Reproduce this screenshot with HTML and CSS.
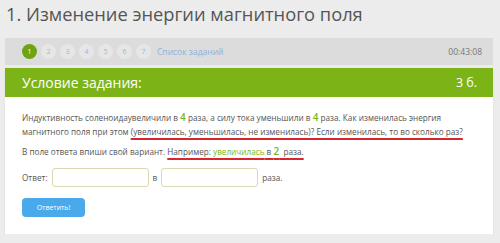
FILE: index.html
```html
<!doctype html>
<html>
  <head>
    <meta charset="utf-8">
    <title>Изменение энергии магнитного поля</title>
    <link rel="stylesheet" href="styles.css">
  </head>
  <body>
    <h1 class="title">1. Изменение энергии магнитного поля</h1>

    <div class="nav">
      <div class="steps">
        <span class="step active">1</span>
        <span class="step">2</span>
        <span class="step">3</span>
        <span class="step">4</span>
        <span class="step">5</span>
        <span class="step">6</span>
        <span class="step">7</span>
        <a class="task-list">Список заданий</a>
      </div>
      <span class="timer">00:43:08</span>
    </div>

    <div class="card">
      <div class="card-header">
        <span>Условие задания:</span>
        <span class="points">3 б.</span>
      </div>
      <div class="card-body">
        <p class="text">
          Индуктивность соленоидаувеличили в <b class="num">4</b> раза, а силу тока уменьшили в <b class="num">4</b> раза. Как изменилась энергия<br>
          магнитного поля при этом <span class="mark">(увеличилась, уменьшилась, не изменилась)? Если изменилась, то во сколько раз?</span>
        </p>
        <p class="text">
          В поле ответа впиши свой вариант. <span class="mark">Например: <span class="example">увеличилась</span> в <b class="num">2</b>&nbsp; раза.</span>
        </p>
        <div class="answer">
          <span>Ответ:</span>
          <input class="field" type="text">
          <span>в</span>
          <input class="field" type="text">
          <span>раза.</span>
        </div>
        <button class="submit">Ответить!</button>
      </div>
    </div>
  </body>
</html>
```

FILE: styles.css
```css
body {
  margin: 0;
  padding: 0 7px 0 5px;
  background-color: #ececec;
  font-family: "Open Sans", "Liberation Sans", sans-serif;
  color: #555;
}

.title {
  margin: 0;
  padding: 0 0 0 1px;
  height: 38px;
  font-size: 18.3px;
  line-height: 28px;
  font-weight: 400;
  color: #555;
}

.nav {
  display: flex;
  justify-content: space-between;
  align-items: center;
  height: 27px;
  padding: 0 11px 0 17px;
  background-color: #dcdcdc;
}

.steps {
  display: flex;
  align-items: center;
  gap: 4px;
}

.step {
  width: 15px;
  height: 15px;
  border-radius: 50%;
  background-color: #e6e6e6;
  color: #9ab7dd;
  font-size: 7px;
  line-height: 15px;
  text-align: center;
}

.step.active {
  background-color: #6ea314;
  color: #fff;
}

.task-list {
  margin-left: 2px;
  color: #8eb1dc;
  font-size: 8.5px;
}

.timer {
  font-size: 8.5px;
  color: #777;
}

.card {
  margin-top: 3px;
  background-color: #fff;
  box-shadow: 0 1px 2px rgba(0, 0, 0, 0.08);
}

.card-header {
  display: flex;
  justify-content: space-between;
  align-items: center;
  height: 29px;
  padding: 0 16px 0 17px;
  background-color: #7cb418;
  color: #fff;
  font-size: 14px;
}

.points {
  font-size: 12.5px;
}

.card-body {
  padding: 14px 17px 17px;
}

.text {
  margin: 0 0 6px;
  font-size: 8.2px;
  line-height: 14px;
  white-space: nowrap;
}

.num {
  color: #7cb418;
  font-size: 10px;
  font-weight: 600;
  line-height: 1;
}

.example {
  color: #7cb418;
}

.mark {
  text-decoration: underline;
  text-decoration-color: #d9262c;
  text-decoration-thickness: 1.5px;
  text-underline-offset: 3px;
}

.answer {
  display: flex;
  align-items: center;
  gap: 4px;
  margin-top: 9px;
  font-size: 8.2px;
}

.field {
  width: 97px;
  height: 19px;
  box-sizing: border-box;
  border: 1px solid #dcd8b4;
  border-radius: 3px;
  background-color: #fff;
}

.submit {
  display: block;
  margin-top: 11px;
  width: 63px;
  height: 19px;
  border: none;
  border-radius: 4px;
  background-color: #4aa9ea;
  color: #fff;
  font-family: inherit;
  font-size: 7px;
}
```
